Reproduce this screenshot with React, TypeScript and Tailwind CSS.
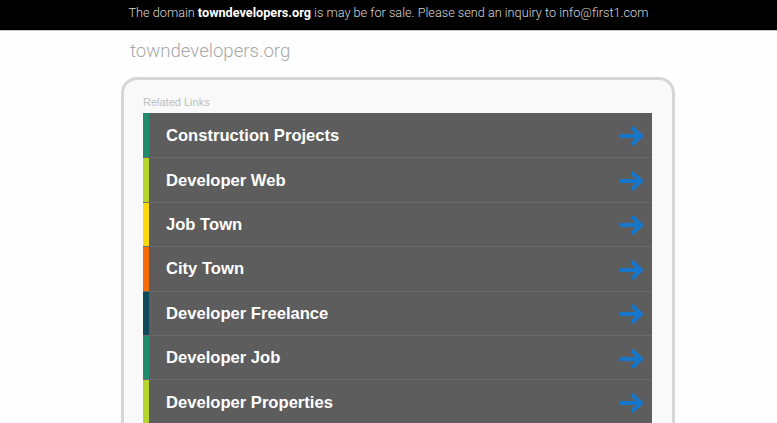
import React from 'react';

interface LinkItem {
    label: string;
    bar: string;
}

const links: LinkItem[] = [
    { label: 'Construction Projects', bar: 'bg-[#1f8c6c]' },
    { label: 'Developer Web', bar: 'bg-[#b5d42e]' },
    { label: 'Job Town', bar: 'bg-[#fcd80e]' },
    { label: 'City Town', bar: 'bg-[#f76c0a]' },
    { label: 'Developer Freelance', bar: 'bg-[#0c4a5c]' },
    { label: 'Developer Job', bar: 'bg-[#1f8c6c]' },
    { label: 'Developer Properties', bar: 'bg-[#b5d42e]' },
];

const Arrow = () => (
    <svg width="26" height="20" viewBox="0 0 26 20" fill="none">
        <path d="M2 10 H21" stroke="#1676cc" strokeWidth="4.2" strokeLinecap="round" />
        <path d="M14 2.5 L22 10 L14 17.5" stroke="#1676cc" strokeWidth="4.2" strokeLinecap="round" strokeLinejoin="round" />
    </svg>
);

const App: React.FC = () => {
    return (
        <div className="h-[423px] w-[777px] overflow-hidden bg-[#fefefe] font-['Liberation_Sans',Arial,sans-serif]">
            <div className="flex h-[31px] items-center justify-center border-b border-[#c8c8c8] bg-black pb-[4px] text-[12.7px] text-[#d8d8d8] font-['Roboto',sans-serif] font-light">
                <span>
                    The domain <b className="font-bold text-white">towndevelopers.org</b> is may be for sale. Please send an inquiry to info@first1.com
                </span>
            </div>
            <div className="pl-[130px] pt-[7px] text-[18.6px] leading-[26px] text-[#a8a8a8] font-['Roboto',sans-serif] font-light">
                towndevelopers.org
            </div>
            <div className="ml-[121px] mt-[13px] h-[400px] w-[554px] rounded-[16px] border-[3px] border-[#d6d6d6] bg-[#f9f9f9] pl-[19px] pt-[14px]">
                <div className="h-[19px] text-[11px] text-[#bdbdbd]">Related Links</div>
                <div className="w-[509px] bg-[#5d5d5d]">
                    {links.map((item, index) => (
                        <div
                            key={item.label}
                            className={`flex h-[44.4px] items-center ${index > 0 ? 'border-t border-[#6a6a6a]' : ''}`}
                        >
                            <div className={`h-full w-[6px] ${item.bar}`} />
                            <div className="flex flex-1 items-center justify-between pl-[17px] pr-[7px] pt-[2px]">
                                <span className="text-[16.6px] font-bold text-white">{item.label}</span>
                                <Arrow />
                            </div>
                        </div>
                    ))}
                </div>
            </div>
        </div>
    );
};

export default App;
